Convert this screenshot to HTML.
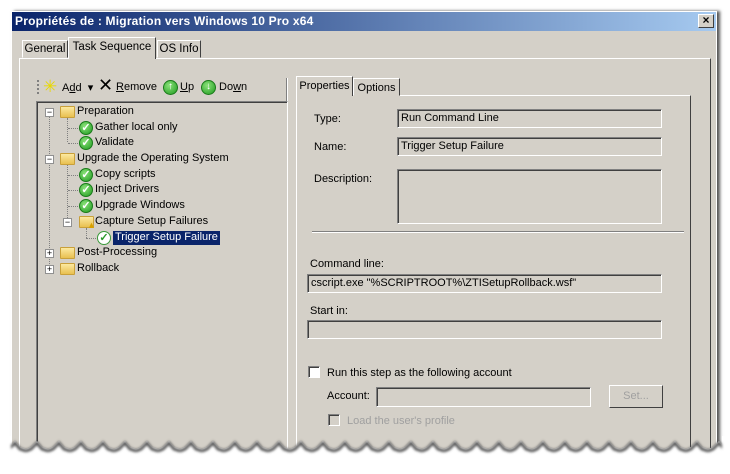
<!DOCTYPE html>
<html><head><meta charset="utf-8"><style>
*{margin:0;padding:0;box-sizing:border-box}
body{width:730px;height:474px;background:#fff;position:relative;overflow:hidden;font-family:"Liberation Sans",Arial,sans-serif;font-size:11px;color:#000}
.a{position:absolute}
.win{left:11px;top:11px;width:706px;height:450px;background:#d4d0c8;border:1px solid #fff;box-shadow:3px 0 3px #555}
.title{left:12px;top:12px;width:704px;height:19px;background:linear-gradient(90deg,#0a246a,#a6caf0);color:#fff;font-weight:bold;font-size:12px;padding:2px 3px;letter-spacing:.2px}
.close{left:698px;top:14px;width:16px;height:14px;background:#d4d0c8;border:1px solid;border-color:#fff #404040 #404040 #fff;font-size:12px;font-weight:bold;text-align:center;line-height:11px}
.tab{border:1px solid;border-color:#fff #404040 transparent #fff;background:#d4d0c8;padding:2px 0;font-size:11.5px;text-align:center;white-space:nowrap}
.panel{border:1px solid;border-color:#fff #404040 #404040 #fff}
.inp{background:#d4d0c8;border:1px solid;border-color:#808080 #fff #fff #808080;box-shadow:inset 1px 1px 0 #404040;font-size:11px;padding:2px 3px;white-space:nowrap}
.lbl{font-size:11px;white-space:nowrap}
.tree{left:36px;top:101px;width:252px;height:360px;background:#d4d0c8;border:1px solid;border-color:#808080 #fff #fff #808080;box-shadow:inset 1px 1px 0 #404040}
.row{position:absolute;font-size:11px;white-space:nowrap}
.pm{position:absolute;width:9px;height:9px;border:1px solid #909090;background:#fff;font-size:9px;line-height:6px;text-align:center;color:#000}
.fold{position:absolute;width:15px;height:12px;background:linear-gradient(#fce9a0,#e8c050);border:1px solid #c9a03a;border-radius:1px}
.chk{position:absolute;width:14px;height:14px;border-radius:50%;background:radial-gradient(circle at 40% 35%,#8be27a,#1e9a1e);border:1px solid #197a19;color:#fff;font-size:11px;font-weight:bold;line-height:12px;text-align:center}
.dl{position:absolute;border-left:1px dotted #808080}
.dh{position:absolute;border-top:1px dotted #808080}
.cb{position:absolute;width:12px;height:12px;background:#fff;border:1px solid;border-color:#808080 #fff #fff #808080;box-shadow:inset 1px 1px 0 #404040}
</style></head><body>
<div class="a win"></div>
<div class="a title">Propriétés de : Migration vers Windows 10 Pro x64</div>
<div class="a close">×</div>
<!-- main tabs -->
<div class="a panel" style="left:19px;top:58px;width:692px;height:400px"></div>
<div class="a tab" style="left:22px;top:40px;width:46px;height:18px">General</div>
<div class="a tab" style="left:68px;top:37px;width:88px;height:22px;border-bottom:none;padding-top:3px">Task Sequence</div>
<div class="a tab" style="left:157px;top:40px;width:44px;height:18px">OS Info</div>
<!-- left area -->
<div class="a" style="left:286px;top:78px;width:2px;height:380px;border-left:1px solid #808080;border-right:1px solid #fff"></div>
<div class="a" style="left:37px;top:80px;width:2px;height:14px;border-left:2px dotted #808080"></div>
<div class="a" style="left:43px;top:78px;font-size:17px;color:#e8d800;line-height:17px">✳</div>
<div class="a lbl" style="left:62px;top:81px">A<u>d</u>d &nbsp;▾</div>
<div class="a" style="left:98px;top:76px;font-size:18px;line-height:18px">✕</div>
<div class="a lbl" style="left:116px;top:81px"><u>R</u>emove</div>
<div class="a chk" style="left:163px;top:80px;width:15px;height:15px;font-size:10px">↑</div>
<div class="a lbl" style="left:180px;top:81px"><u>U</u>p</div>
<div class="a chk" style="left:201px;top:80px;width:15px;height:15px;font-size:10px">↓</div>
<div class="a lbl" style="left:219px;top:81px">Do<u>w</u>n</div>
<div class="a tree" style="height:357px"></div>
<!-- tree lines -->
<div class="dl" style="left:49px;top:117px;height:153px"></div>
<div class="dl" style="left:67px;top:118px;height:24px"></div>
<div class="dh" style="left:68px;top:128px;width:10px"></div>
<div class="dh" style="left:68px;top:143px;width:10px"></div>
<div class="dl" style="left:67px;top:165px;height:57px"></div>
<div class="dh" style="left:68px;top:175px;width:10px"></div>
<div class="dh" style="left:68px;top:190px;width:10px"></div>
<div class="dh" style="left:68px;top:206px;width:10px"></div>
<div class="dl" style="left:86px;top:228px;height:10px"></div>
<div class="dh" style="left:86px;top:238px;width:10px"></div>
<div class="pm" style="left:45px;top:108px">−</div>
<div class="pm" style="left:45px;top:155px">−</div>
<div class="pm" style="left:63px;top:218px">−</div>
<div class="pm" style="left:45px;top:249px">+</div>
<div class="pm" style="left:45px;top:265px">+</div>
<div class="fold" style="left:60px;top:106px"></div><div class="row" style="left:77px;top:105px">Preparation</div>
<div class="chk" style="left:79px;top:121px">✓</div><div class="row" style="left:95px;top:121px">Gather local only</div>
<div class="chk" style="left:79px;top:136px">✓</div><div class="row" style="left:95px;top:136px">Validate</div>
<div class="fold" style="left:60px;top:153px"></div><div class="row" style="left:77px;top:152px">Upgrade the Operating System</div>
<div class="chk" style="left:79px;top:168px">✓</div><div class="row" style="left:95px;top:168px">Copy scripts</div>
<div class="chk" style="left:79px;top:183px">✓</div><div class="row" style="left:95px;top:183px">Inject Drivers</div>
<div class="chk" style="left:79px;top:199px">✓</div><div class="row" style="left:95px;top:199px">Upgrade Windows</div>
<div class="fold" style="left:79px;top:216px"></div><div class="a" style="left:87px;top:220px;color:#d8a000;font-size:9px">▲</div><div class="row" style="left:95px;top:215px">Capture Setup Failures</div>
<div class="chk" style="left:97px;top:231px;background:#fff;color:#2a9a2a;border-color:#3a9a3a">✓</div><div class="row" style="left:113px;top:231px;background:#0a246a;color:#fff;padding:0 2px;height:14px">Trigger Setup Failure</div>
<div class="fold" style="left:60px;top:247px"></div><div class="row" style="left:77px;top:246px">Post-Processing</div>
<div class="fold" style="left:60px;top:263px"></div><div class="row" style="left:77px;top:262px">Rollback</div>
<!-- right tabs -->
<div class="a panel" style="left:296px;top:95px;width:395px;height:363px"></div>
<div class="a tab" style="left:296px;top:76px;width:57px;height:20px;border-bottom:none;font-size:11px;padding:3px 0">Properties</div>
<div class="a tab" style="left:353px;top:78px;width:47px;height:18px;font-size:11px;padding:3px 0">Options</div>
<div class="a lbl" style="left:314px;top:113px">Type:</div>
<div class="a inp" style="left:397px;top:109px;width:265px;height:19px">Run Command Line</div>
<div class="a lbl" style="left:314px;top:141px">Name:</div>
<div class="a inp" style="left:397px;top:137px;width:265px;height:19px">Trigger Setup Failure</div>
<div class="a lbl" style="left:314px;top:173px">Description:</div>
<div class="a inp" style="left:397px;top:169px;width:265px;height:55px"></div>
<div class="a" style="left:312px;top:231px;width:372px;height:2px;border-top:1px solid #808080;border-bottom:1px solid #fff"></div>
<div class="a lbl" style="left:310px;top:258px">Command line:</div>
<div class="a inp" style="left:307px;top:274px;width:355px;height:19px">cscript.exe "%SCRIPTROOT%\ZTISetupRollback.wsf"</div>
<div class="a lbl" style="left:310px;top:305px">Start in:</div>
<div class="a inp" style="left:307px;top:320px;width:355px;height:19px"></div>
<div class="cb" style="left:308px;top:366px"></div>
<div class="a lbl" style="left:327px;top:367px">Run this step as the following account</div>
<div class="a lbl" style="left:327px;top:390px">Account:</div>
<div class="a inp" style="left:376px;top:387px;width:215px;height:20px"></div>
<div class="a" style="left:609px;top:385px;width:54px;height:23px;border:1px solid;border-color:#fff #404040 #404040 #fff;color:#a0a0a0;text-align:center;line-height:21px">Set...</div>
<div class="cb" style="left:328px;top:414px;background:#d4d0c8"></div>
<div class="a lbl" style="left:347px;top:415px;color:#a0a0a0">Load the user's profile</div>
<!-- torn edge -->
<svg class="a" style="left:0;top:436px" width="730" height="38">
<defs>
<pattern id="w" width="22" height="38" patternUnits="userSpaceOnUse" x="4"><polygon points="0,13 5,11 11,5 16,11 22,13 22,38 0,38" fill="#fff"/></pattern>
<pattern id="sh" width="22" height="38" patternUnits="userSpaceOnUse" x="4" y="2"><polyline points="0,13 5,11 11,5 16,11 22,13" fill="none" stroke="#555" stroke-width="3"/></pattern>
<filter id="b" x="-5%" y="-50%" width="110%" height="200%"><feGaussianBlur stdDeviation="1.2"/></filter>
</defs>
<rect x="0" y="0" width="730" height="38" fill="url(#w)"/>
<rect x="0" y="0" width="11" height="38" fill="#fff"/>
<rect x="722" y="0" width="8" height="38" fill="#fff"/>
<rect x="11" y="0" width="711" height="30" fill="url(#sh)" filter="url(#b)"/>
</svg>
</body></html>
